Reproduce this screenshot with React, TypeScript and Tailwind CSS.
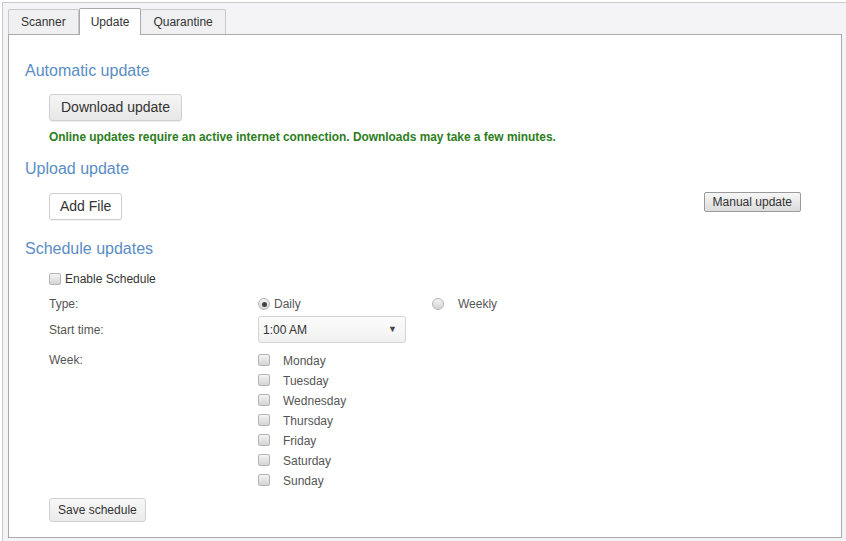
import React from 'react'

const font = { fontFamily: '"Liberation Sans", Arial, sans-serif' }

function Box() {
  return (
    <span className="inline-block w-[12px] h-[12px] rounded-[2px] border border-[#b5b5b5] bg-gradient-to-b from-[#f4f4f4] to-[#d4d4d4] shrink-0" />
  )
}

function Radio({ checked }: { checked?: boolean }) {
  return (
    <span className="relative inline-flex w-[12px] h-[12px] rounded-full border border-[#b5b5b5] bg-gradient-to-b from-[#f4f4f4] to-[#d4d4d4] shrink-0 items-center justify-center">
      {checked && <span className="w-[5px] h-[5px] rounded-full bg-[#444]" />}
    </span>
  )
}

const days = ['Monday', 'Tuesday', 'Wednesday', 'Thursday', 'Friday', 'Saturday', 'Sunday']

export default function App() {
  return (
    <div className="w-[846px] h-[541px] overflow-hidden bg-white pl-[2px] pt-[2px]" style={font}>
      <div className="w-[850px] h-[545px] border-t border-l border-[#c9c9c9] bg-[#f4f4f6] pl-[5px] pt-[5px] flex flex-col">
        {/* tabs */}
        <div className="flex items-end h-[26px] text-[12px] text-[#333]">
          <div className="h-[25px] px-[12px] flex items-center border border-b-0 border-[#c9c9c9] bg-[#f0f0f2] rounded-t-[2px]">Scanner</div>
          <div className="relative z-10 h-[27px] -mb-px px-[11px] flex items-center border border-b-0 border-[#aaa] bg-white rounded-t-[2px]">Update</div>
          <div className="h-[25px] px-[12px] flex items-center border border-b-0 border-l-0 border-[#c9c9c9] bg-[#f0f0f2] rounded-t-[2px]">Quarantine</div>
        </div>
        {/* panel */}
        <div className="w-[834px] h-[504px] border border-[#aaa] bg-white pl-[16px] pt-[26px]">
          <h2 className="h-[20px] leading-[20px] text-[16px] text-[#5a8dc5]">Automatic update</h2>
          <div className="pl-[24px]">
            <button className="mt-[13px] h-[27px] px-[11px] text-[14px] text-[#333] rounded-[3px] border border-[#d0d0d0] bg-gradient-to-b from-[#f5f5f5] to-[#e8e8e8] shadow-[0_1px_1px_rgba(0,0,0,0.08)]">
              Download update
            </button>
            <p className="mt-[8px] h-[16px] leading-[16px] text-[11.9px] font-bold text-[#2d7d1c]">
              Online updates require an active internet connection. Downloads may take a few minutes.
            </p>
          </div>
          <h2 className="mt-[14px] h-[20px] leading-[20px] text-[16px] text-[#5a8dc5]">Upload update</h2>
          <div className="mt-[14px] pl-[24px] pr-[40px] flex items-start justify-between">
            <button className="h-[27px] px-[10px] text-[14px] text-[#333] rounded-[3px] border border-[#cfcfcf] bg-white shadow-[0_1px_1px_rgba(0,0,0,0.06)]">
              Add File
            </button>
            <button className="-mt-[1px] h-[20px] px-[8px] text-[12px] text-[#333] rounded-[2px] border border-[#9a9a9a] bg-gradient-to-b from-[#f6f6f6] to-[#dcdcdc]">
              Manual update
            </button>
          </div>
          <h2 className="mt-[19px] h-[20px] leading-[20px] text-[16px] text-[#5a8dc5]">Schedule updates</h2>
          <div className="pl-[24px] text-[12px] text-[#555]">
            <label className="mt-[10px] h-[20px] flex items-center gap-[4px] text-[#333]">
              <Box />
              <span>Enable Schedule</span>
            </label>
            <div className="mt-[5px] h-[20px] flex items-center">
              <span className="w-[209px]">Type:</span>
              <span className="w-[174px] flex items-center gap-[4px]">
                <Radio checked />
                <span>Daily</span>
              </span>
              <span className="flex items-center gap-[14px]">
                <Radio />
                <span>Weekly</span>
              </span>
            </div>
            <div className="mt-[2px] h-[27px] flex items-center">
              <span className="w-[209px]">Start time:</span>
              <div className="w-[148px] h-[27px] px-[4px] flex items-center justify-between rounded-[3px] border border-[#d4d4d4] bg-gradient-to-b from-[#fcfcfc] to-[#f1f1f1] text-[#333]">
                <span>1:00 AM</span>
                <span className="text-[9px] text-[#444] pr-[4px]">▼</span>
              </div>
            </div>
            <div className="mt-[7px] flex">
              <span className="w-[209px] h-[20px] leading-[20px]">Week:</span>
              <div className="flex flex-col">
                {days.map(d => (
                  <label key={d} className="h-[20px] flex items-center gap-[13px]">
                    <Box />
                    <span className="-mb-[1px]">{d}</span>
                  </label>
                ))}
              </div>
            </div>
            <button className="mt-[8px] h-[24px] px-[8px] text-[12px] text-[#333] rounded-[3px] border border-[#d0d0d0] bg-gradient-to-b from-[#f7f7f7] to-[#ebebeb]">
              Save schedule
            </button>
          </div>
        </div>
      </div>
    </div>
  )
}
